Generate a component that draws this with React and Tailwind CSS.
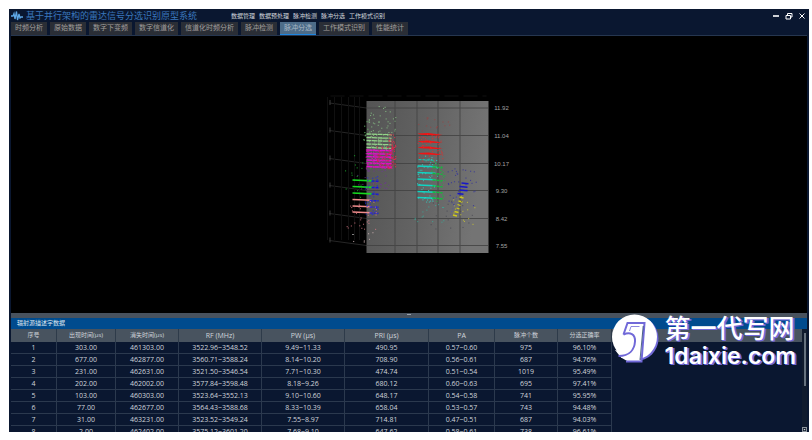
import React from "react";

const menus = ["数据管理", "数据预处理", "脉冲检测", "脉冲分选", "工作模式识别"];

const tabs = [
  "时频分析",
  "原始数据",
  "数字下变频",
  "数字信道化",
  "信道化时频分析",
  "脉冲检测",
  "脉冲分选",
  "工作模式识别",
  "性能统计",
];

const columns = [
  { label: "序号", size: "w-[46px] text-[6px]" },
  { label: "出现时间(μs)", size: "w-[59px] text-[6px]" },
  { label: "消失时间(μs)", size: "w-[63px] text-[6px]" },
  { label: "RF (MHz)", size: "w-[83px] text-[7px]" },
  { label: "PW (μs)", size: "w-[83px] text-[7px]" },
  { label: "PRI (μs)", size: "w-[84px] text-[7px]" },
  { label: "PA", size: "w-[66px] text-[7px]" },
  { label: "脉冲个数", size: "w-[63px] text-[6px]" },
  { label: "分选正确率", size: "w-[54px] text-[6px]" },
];

const rows = [
  ["1", "303.00", "461303.00", "3522.96~3548.52", "9.49~11.33", "490.95", "0.57~0.60", "975", "96.10%"],
  ["2", "677.00", "462877.00", "3560.71~3588.24", "8.14~10.20", "708.90", "0.56~0.61", "687", "94.76%"],
  ["3", "231.00", "462631.00", "3521.50~3546.54", "7.71~10.30", "474.74", "0.51~0.54", "1019", "95.49%"],
  ["4", "202.00", "462002.00", "3577.84~3598.48", "8.18~9.26", "680.12", "0.60~0.63", "695", "97.41%"],
  ["5", "103.00", "460303.00", "3523.64~3552.13", "9.10~10.60", "648.17", "0.54~0.58", "741", "95.95%"],
  ["6", "77.00", "462677.00", "3564.43~3588.68", "8.33~10.39", "658.04", "0.53~0.57", "743", "94.48%"],
  ["7", "31.00", "463231.00", "3523.52~3549.24", "7.55~8.97", "714.81", "0.47~0.51", "687", "94.03%"],
  ["8", "2.00", "462402.00", "3575.12~3601.20", "7.68~9.10", "647.62", "0.58~0.61", "738", "96.61%"],
];

// Small seeded generator, so the scatter looks the same on every render.
function seeded(seed) {
  let s = seed * 7919;
  const next = () => {
    s = (s * 1664525 + 1013904223) % 4294967296;
    return s / 4294967296;
  };
  next();
  next();
  return next;
}

function Cloud({ seed, n, x, y, w, h, color, size = 1.1, opacity = 0.95 }) {
  const rnd = seeded(seed);
  const dots = Array.from({ length: n }, () => [x + rnd() * w, y + rnd() * h]);
  return (
    <g fill={color} opacity={opacity}>
      {dots.map(([cx, cy], i) => (
        <rect key={i} x={cx} y={cy} width={size} height={size} />
      ))}
    </g>
  );
}

function Pulses({ ys, x1, x2, color, width = 1.2, slope = 0.8, dash }) {
  return (
    <g stroke={color} strokeWidth={width} strokeDasharray={dash}>
      {ys.map((y) => (
        <line key={y} x1={x1} y1={y} x2={x2} y2={y + slope} />
      ))}
    </g>
  );
}

const axis = [
  ["11.92", 108],
  ["11.04", 135.5],
  ["10.17", 163.5],
  ["9.30", 190.5],
  ["8.42", 218.5],
  ["7.55", 245.5],
];

function Plot() {
  return (
    <svg viewBox="11 36 795 277" className="h-full w-full" role="img" aria-label="脉冲分选">
      <defs>
        <linearGradient id="wall" x1="0" y1="0" x2="1" y2="0.2">
          <stop offset="0" stopColor="#545454" />
          <stop offset="0.5" stopColor="#626262" />
          <stop offset="1" stopColor="#747474" />
        </linearGradient>
      </defs>
      <g stroke="#262626" strokeWidth="1">
        {axis.map(([t, y]) => (
          <path key={t} d={`M329 ${y - 5}L366 ${y}`} />
        ))}
      </g>
      <g stroke="#101010" strokeWidth="1">
        {[327, 334, 341, 348, 354, 359].map((x) => (
          <path key={x} d={`M${x} 97V240`} />
        ))}
        <path d="M330 96H486" strokeDasharray="14 5" />
      </g>
      <g stroke="#3c3c3c" strokeWidth="1">
        {axis.map(([t, y]) => (
          <path key={t} d={`M329.500 ${y - 8}v5`} />
        ))}
      </g>
      <rect x="366" y="101" width="122" height="152" fill="url(#wall)" />
      <g stroke="#404040" strokeWidth="1" opacity="0.8">
        {[394.5, 416.5, 437.5, 459.5].map((x) => (
          <path key={x} d={`M${x} 101V253`} />
        ))}
        {axis.map(([t, y]) => (
          <path key={t} d={`M366 ${y}H488`} />
        ))}
      </g>

      <Cloud seed={3} n={34} x={367} y={114} w={28} h={20} color="#8ecf8c" opacity={0.7} />
      <Cloud seed={4} n={6} x={370} y={105} w={22} h={9} color="#8ecf8c" opacity={0.75} />
      <Cloud seed={8} n={9} x={361} y={120} w={8} h={20} color="#67b56a" />
      <Pulses ys={[134, 137.5, 140.5, 144, 147.5]} x1={366} x2={391} color="#93d68a" width={1.3} dash="5 0.5" />
      <Cloud seed={31} n={40} x={366} y={134} w={25} h={15} color="#8fc584" opacity={0.7} />
      <Cloud seed={21} n={50} x={388} y={134} w={7} h={34} color="#e0304c" />
      <Pulses ys={[150, 153.5, 156.5, 160, 163, 166.5]} x1={366} x2={391} color="#e011cf" width={1.5} dash="6 0.4" />
      <Cloud seed={32} n={130} x={365} y={149} w={27} h={19} color="#c81aa5" />
      <Cloud seed={33} n={60} x={376} y={146} w={18} h={22} color="#d8204a" />
      <Cloud seed={34} n={32} x={356} y={167} w={32} h={22} color="#7430a0" opacity={0.7} />
      <Cloud seed={35} n={18} x={340} y={155} w={30} h={42} color="#1fae2f" opacity={0.8} />
      <Pulses ys={[180, 186.5, 193]} x1={352} x2={372} color="#16d81f" width={1.7} />
      <Pulses ys={[181, 187.5, 194]} x1={371} x2={378} color="#1616d8" width={1.4} dash="3 1" slope={0.2} />
      <Pulses ys={[199.5, 206, 212]} x1={352} x2={371} color="#f08c8c" width={1.5} />
      <Pulses ys={[200.5, 207, 213]} x1={369} x2={378} color="#2020d0" width={1.4} dash="3 1" slope={0.2} />
      <Cloud seed={41} n={40} x={364} y={176} w={13} h={38} color="#2730cf" />
      <Cloud seed={42} n={30} x={346} y={197} w={30} h={34} color="#dc7c88" opacity={0.75} />
      <Cloud seed={43} n={6} x={350} y={228} w={28} h={14} color="#cdb4b4" opacity={0.8} />
      <rect x="352" y="234" width="1" height="1" fill="#ffffff" />

      <Cloud seed={51} n={18} x={417} y={116} w={32} h={22} color="#a73a3a" opacity={0.6} />
      <g fill="#f01414">
        {[134, 141.5, 147.5, 153.5].map((y) => (
          <path key={y} d={`M417 ${y - 0.5}L428 ${y - 1}L442 ${y + 1}L436 ${y + 1.5}L420 ${y + 0.8}Z`} />
        ))}
      </g>
      <Cloud seed={52} n={60} x={417} y={133} w={25} h={28} color="#ec2b2b" opacity={0.7} />
      <Pulses ys={[159.5]} x1={418} x2={434} color="#18bfae" dash="3 1" />
      <Pulses ys={[166, 172.5, 179, 185, 191.5, 197.5]} x1={417} x2={435} color="#10d4c2" width={1.6} />
      <Pulses ys={[167, 173.5, 180, 186, 192, 198]} x1={432} x2={442} color="#16b83b" width={1.5} dash="3 1" />
      <Cloud seed={53} n={50} x={415} y={155} w={22} h={47} color="#29d8cc" opacity={0.75} />
      <Cloud seed={54} n={36} x={430} y={160} w={14} h={43} color="#20b244" opacity={0.8} />
      <Cloud seed={55} n={15} x={414} y={198} w={32} h={24} color="#36b19d" opacity={0.7} />

      <Cloud seed={61} n={34} x={446} y={168} w={30} h={38} color="#34349c" opacity={0.8} />
      <Pulses ys={[183]} x1={461} x2={468} color="#1717c8" width={1.4} />
      <Pulses ys={[186.5, 190]} x1={459} x2={467} color="#1717c8" width={1.4} />
      <Pulses ys={[193.5]} x1={457} x2={463} color="#1717c8" width={1.4} />
      <path d="M457 194L450 215" stroke="#5656a8" strokeDasharray="1 2" />
      <g stroke="#cfc91a" strokeWidth="1.3">
        <path d="M459 197l4 1M458 201l4 1M457 204.500l3 1M456 208l3 1M454 211.500l4 1M452.500 215l4 1" />
      </g>
      <Cloud seed={62} n={14} x={452} y={196} w={22} h={28} color="#c9c632" opacity={0.8} />
      <Cloud seed={63} n={16} x={428} y={200} w={45} h={32} color="#4b4b56" opacity={0.8} />

      <g fill="#a3a3a3" fontFamily="'Liberation Sans', sans-serif" fontSize="6" textAnchor="middle">
        {axis.map(([t, y]) => (
          <text key={t} x="501" y={y + 2}>
            {t}
          </text>
        ))}
      </g>
    </svg>
  );
}

function Watermark() {
  return (
    <div className="pointer-events-none absolute right-[13px] bottom-[62px] flex items-start gap-[6px]">
      <svg viewBox="0 0 47 49" className="h-[49px] w-[47px]" aria-hidden="true">
        <circle cx="24" cy="24.5" r="22.5" fill="#7169d8" />
        <circle cx="22.5" cy="23" r="22.5" fill="#ffffff" />
        <path d="M3 36L9 43.500L16 47.500H30L24 40Z" fill="#ffffff" />
        <path
          d="M11.500 20.500L15.500 9H32.500L29.500 47.500H14"
          fill="none"
          stroke="#7169d8"
          strokeWidth="2"
        />
        <path
          d="M11.500 20.500C18 17.500 23.500 20 23 27.500C22.500 35 18 42 6.500 42"
          fill="none"
          stroke="#7169d8"
          strokeWidth="2"
        />
        <path d="M27.500 12.500H19L17.500 17" fill="none" stroke="#7169d8" strokeWidth="0.8" />
        <path d="M31.200 12L28 46" fill="none" stroke="#28456b" strokeWidth="0.8" />
      </svg>
      <div className="whitespace-nowrap text-white [text-shadow:1px_1px_0_#7169d8,2px_1px_0_#7169d8]">
        <div className="text-[26px] leading-[28px] font-medium">第一代写网</div>
        <div className="font-['Inter',sans-serif] text-[23px] leading-[28px] font-semibold">1daixie.com</div>
      </div>
    </div>
  );
}

export default function App() {
  return (
    <div className="h-screen bg-white pt-[9px] pr-[3px] pb-2 pl-[9px] font-['Open_Sans','Noto_Sans_CJK_SC',sans-serif]">
      <div className="relative flex h-full flex-col overflow-hidden bg-[#0a1730]">
        <header className="flex h-[13px] shrink-0 items-center pl-[2px]">
          <svg viewBox="0 0 12 12" className="h-3 w-3 shrink-0" aria-hidden="true">
            <path
              d="M0 6H2L3 3.500L4 9L5.500 1.500L6.500 10L8 4L9 8L10 7H12"
              fill="none"
              stroke="#5ea7e6"
              strokeWidth="1.3"
            />
          </svg>
          <h1 className="ml-[3px] text-[9px] leading-[12px] whitespace-nowrap text-[#3a78bd]">
            基于并行架构的雷达信号分选识别原型系统
          </h1>
          <nav className="ml-[34px] flex gap-1 text-[6px] leading-[12px] whitespace-nowrap text-[#d3d7dd]">
            {menus.map((m) => (
              <button key={m} type="button">
                {m}
              </button>
            ))}
          </nav>
          <div className="ml-auto flex items-center gap-[5px] pr-[3px] text-white">
            <button type="button" aria-label="最小化">
              <svg viewBox="0 0 8 8" className="h-2 w-2">
                <path d="M1 4H7" stroke="currentColor" strokeWidth="1.6" />
              </svg>
            </button>
            <button type="button" aria-label="还原">
              <svg viewBox="0 0 8 8" className="h-2 w-2" fill="none" stroke="currentColor">
                <path d="M2.500 3V1.500H7V5H5.500" />
                <path d="M1 3.500H5.500V7H1Z" />
              </svg>
            </button>
            <button type="button" aria-label="关闭">
              <svg viewBox="0 0 8 8" className="h-2 w-2">
                <path d="M1.500 1.500L6.500 6.500M6.500 1.500L1.500 6.500" stroke="currentColor" />
              </svg>
            </button>
          </div>
        </header>

        <div role="tablist" className="flex h-[13px] shrink-0 gap-[3px] pl-[2px]">
          {tabs.map((t) => (
            <button
              key={t}
              type="button"
              role="tab"
              aria-selected={t === "脉冲分选"}
              className="border-b border-[#2a2e36] bg-[#2a2e36] px-1 text-[7px] leading-[12px] whitespace-nowrap text-[#a09f9d] aria-selected:border-[#1e86e0] aria-selected:bg-[#4d6c89] aria-selected:text-[#a9b7c4]"
            >
              {t}
            </button>
          ))}
        </div>

        <main className="mx-[2px] flex min-h-0 flex-1 flex-col border-t border-[#26364f]">
          <section className="min-h-0 flex-1 bg-black">
            <Plot />
          </section>

          <section className="flex h-[119px] shrink-0 flex-col overflow-hidden">
            <div className="flex h-[5px] shrink-0 justify-center bg-[#48525e] pt-px">
              <div className="h-px w-1 bg-[#9aa2ab]" />
            </div>
            <h2 className="h-[11px] shrink-0 bg-[#004b8e] pl-[6px] text-[6px] leading-[11px] text-[#dfe8f2]">
              辐射源描述字数据
            </h2>
            <div className="flex min-h-0 flex-1">
              <div className="min-w-0 flex-1 overflow-hidden">
                <table className="w-full table-fixed border-separate border-spacing-0 text-center text-[#d0d4da]">
                  <thead>
                    <tr className="h-[13px] bg-[#48535f]">
                      {columns.map((c) => (
                        <th
                          key={c.label}
                          scope="col"
                          className={`${c.size} border-r border-[#2e3b4a] p-0 leading-[13px] font-normal whitespace-nowrap`}
                        >
                          {c.label}
                        </th>
                      ))}
                      <td className="p-0" />
                    </tr>
                  </thead>
                  <tbody>
                    {rows.map((r) => (
                      <tr key={r[0]} className="h-[12px]">
                        {r.map((v, i) => (
                          <td
                            key={i}
                            className="border-r border-b border-[#2b394e] p-0 text-[7px] leading-[11px] whitespace-nowrap"
                          >
                            {v}
                          </td>
                        ))}
                        <td className="p-0" />
                      </tr>
                    ))}
                  </tbody>
                </table>
              </div>
              <div className="flex w-[5px] shrink-0 flex-col items-center justify-between bg-[#101b2e]">
                <div className="mt-1 h-[53px] w-[2px] bg-[#66727f]" />
                <svg viewBox="0 0 5 5" className="h-[5px] w-[5px]" aria-hidden="true">
                  <rect x="0.500" y="0.500" width="4" height="4" fill="#1b2636" stroke="#8c949c" />
                  <path d="M1.500 2H3.500L2.500 3.500Z" fill="#e0e0e0" />
                </svg>
              </div>
            </div>
          </section>
        </main>

        <Watermark />
      </div>
    </div>
  );
}
